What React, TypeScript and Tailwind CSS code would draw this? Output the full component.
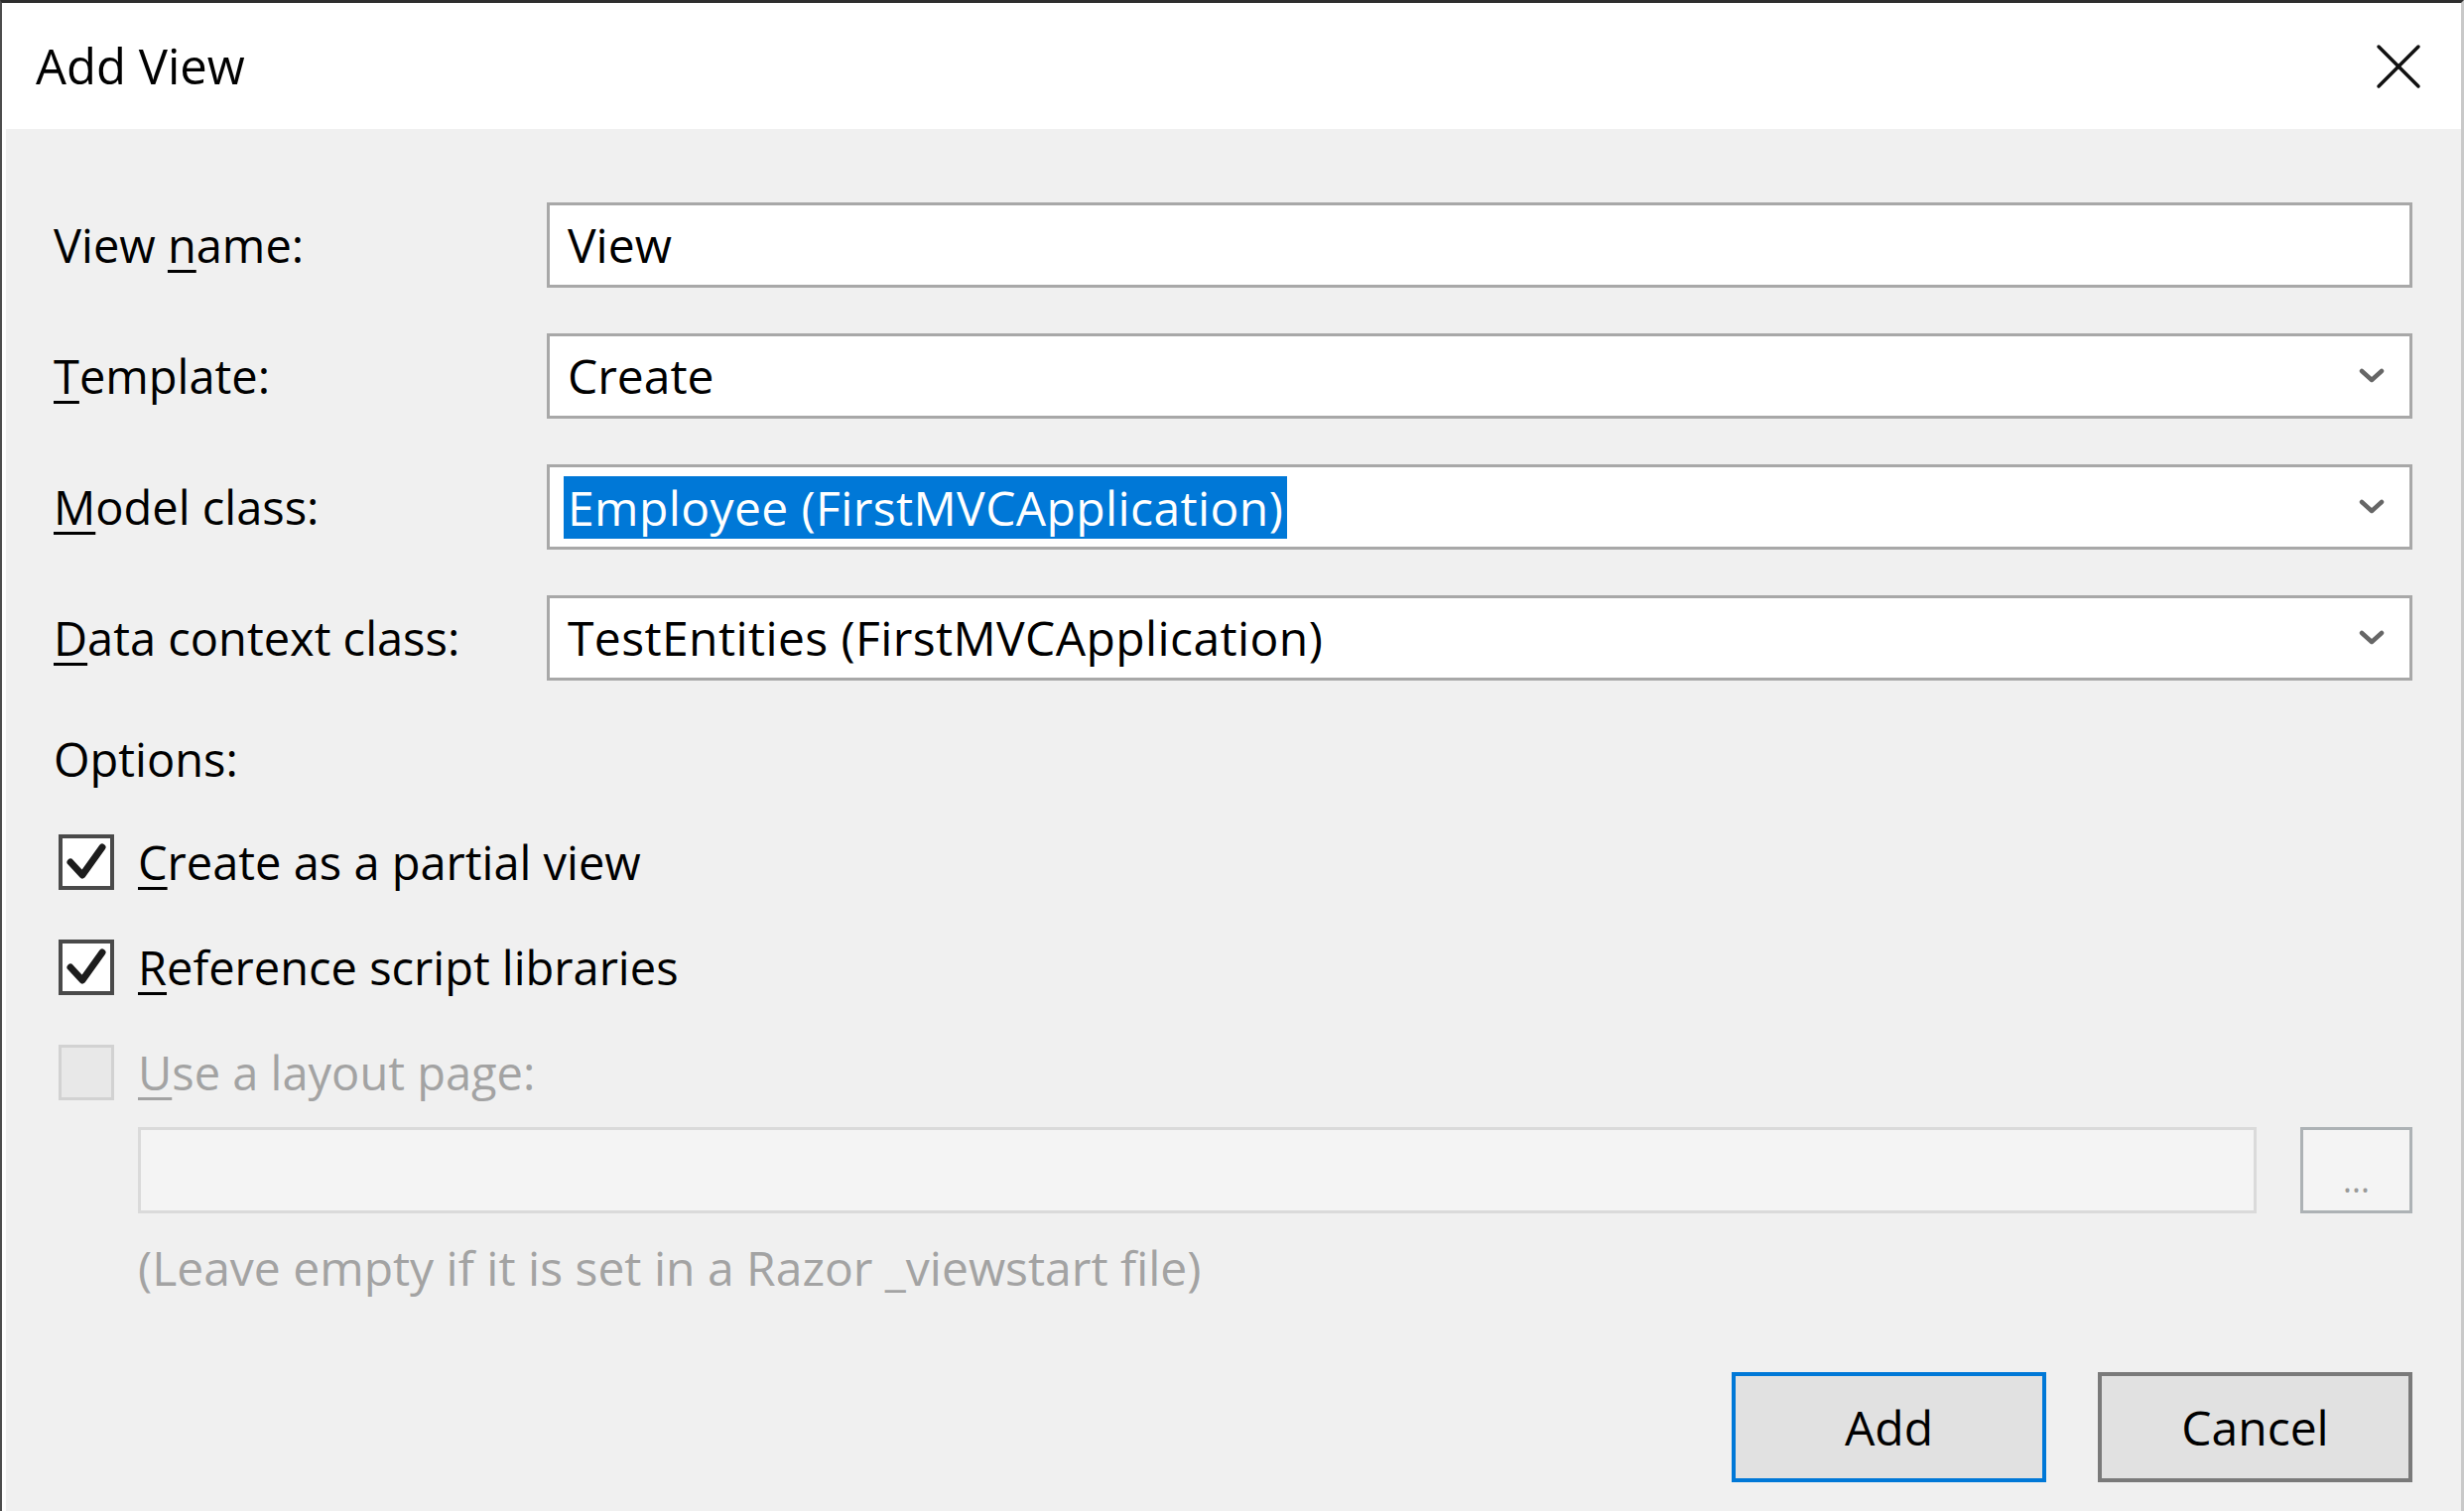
import React from 'react';

const font = { fontFamily: '"Open Sans", "Noto Sans", sans-serif' };

function Chevron() {
  return (
    <svg width="26" height="18" viewBox="0 0 26 18" className="shrink-0">
      <polyline
        points="3,4 13,13 23,4"
        fill="none"
        stroke="#666666"
        strokeWidth="4.5"
        strokeLinecap="round"
        strokeLinejoin="round"
      />
    </svg>
  );
}

function CheckBox({ checked, disabled }: { checked?: boolean; disabled?: boolean }) {
  if (disabled) {
    return <div className="w-[56px] h-[56px] shrink-0 border-[3px] border-[#d2d2d2] bg-[#e8e8e8]" />;
  }
  return (
    <div className="w-[56px] h-[56px] shrink-0 border-[4px] border-[#4a4a4a] bg-white flex items-center justify-center">
      {checked && (
        <svg width="48" height="48" viewBox="0 0 48 48">
          <polyline
            points="8,24 20,37 40,9"
            fill="none"
            stroke="#1c1c1c"
            strokeWidth="7"
            strokeLinecap="round"
            strokeLinejoin="round"
          />
        </svg>
      )}
    </div>
  );
}

function Field({ label, children }: { label: React.ReactNode; children: React.ReactNode }) {
  return (
    <div className="flex items-center">
      <div className="w-[497px] shrink-0 text-[47px] text-black">{label}</div>
      {children}
    </div>
  );
}

const mn = 'underline decoration-[3px] underline-offset-[7px]';

export default function App() {
  return (
    <div
      style={font}
      className="w-[2483px] h-[1523px] flex flex-col border-t-[3px] border-t-[#2e2e2e] border-l-[2px] border-l-[#4d4d4d] border-r-[3px] border-r-[#c9c9c9] bg-white overflow-hidden"
    >
      {/* title bar */}
      <div className="h-[127px] shrink-0 bg-white flex items-center justify-between pl-[34px] pr-[40px]">
        <span className="text-[49px] text-black">Add View</span>
        <svg width="46" height="46" viewBox="0 0 46 46">
          <line x1="3" y1="3" x2="43" y2="43" stroke="#111" strokeWidth="3.5" strokeLinecap="round" />
          <line x1="43" y1="3" x2="3" y2="43" stroke="#111" strokeWidth="3.5" strokeLinecap="round" />
        </svg>
      </div>

      {/* body */}
      <div className="flex-1 bg-[#f0f0f0] border-l-[4px] border-l-white pl-[48px] pr-[49px] pt-[74px] flex flex-col">
        <div className="flex flex-col gap-[46px]">
          <Field label={<>View <span className={mn}>n</span>ame:</>}>
            <div className="flex-1 h-[86px] border-[3px] border-[#a8a8a8] bg-white flex items-center pl-[18px] text-[48px] text-black">
              View
            </div>
          </Field>
          <Field label={<><span className={mn}>T</span>emplate:</>}>
            <div className="flex-1 h-[86px] border-[3px] border-[#a8a8a8] bg-white flex items-center justify-between pl-[18px] pr-[25px] text-[48px] text-black">
              <span>Create</span>
              <Chevron />
            </div>
          </Field>
          <Field label={<><span className={mn}>M</span>odel class:</>}>
            <div className="flex-1 h-[86px] border-[3px] border-[#a8a8a8] bg-white flex items-center justify-between pl-[14px] pr-[25px] text-[48px]">
              <span className="bg-[#0078d7] text-white h-[63px] leading-[63px] px-[4px] tracking-[0.4px]">
                Employee (FirstMVCApplication)
              </span>
              <Chevron />
            </div>
          </Field>
          <Field label={<><span className={mn}>D</span>ata context class:</>}>
            <div className="flex-1 h-[86px] border-[3px] border-[#a8a8a8] bg-white flex items-center justify-between pl-[18px] pr-[25px] text-[48px] text-black">
              <span className="tracking-[0.4px]">TestEntities (FirstMVCApplication)</span>
              <Chevron />
            </div>
          </Field>
        </div>

        <div className="mt-[49px] text-[47px] leading-[60px] text-black">Options:</div>

        <div className="mt-[46px] flex flex-col gap-[50px] pl-[5px]">
          <div className="flex items-center gap-[24px] h-[56px]">
            <CheckBox checked />
            <span className="text-[47px] text-black">
              <span className={mn}>C</span>reate as a partial view
            </span>
          </div>
          <div className="flex items-center gap-[24px] h-[56px]">
            <CheckBox checked />
            <span className="text-[47px] text-black">
              <span className={mn}>R</span>eference script libraries
            </span>
          </div>
          <div className="flex items-center gap-[24px] h-[56px]">
            <CheckBox disabled />
            <span className="text-[47px] text-[#a3a3a3]">
              <span className={mn}>U</span>se a layout page:
            </span>
          </div>
        </div>

        <div className="mt-[27px] ml-[85px] flex gap-[44px]">
          <div className="flex-1 h-[87px] border-[3px] border-[#dadada] bg-[#f4f4f4]" />
          <div className="w-[113px] h-[87px] border-[3px] border-[#adb2b5] bg-[#f4f4f4] flex items-end justify-center pb-[14px] text-[34px] leading-none text-[#9a9a9a]">
            ...
          </div>
        </div>

        <div className="mt-[25px] ml-[85px] text-[48px] leading-[60px] text-[#a3a3a3]">
          (Leave empty if it is set in a Razor _viewstart file)
        </div>

        <div className="mt-[75px] flex justify-end gap-[52px]">
          <div className="w-[317px] h-[111px] border-[4px] border-[#0078d7] bg-[#e1e1e1] flex items-center justify-center text-[48px] text-black">
            Add
          </div>
          <div className="w-[317px] h-[111px] border-[4px] border-[#7a7a7a] bg-[#e1e1e1] flex items-center justify-center text-[48px] text-black">
            Cancel
          </div>
        </div>
      </div>
    </div>
  );
}
